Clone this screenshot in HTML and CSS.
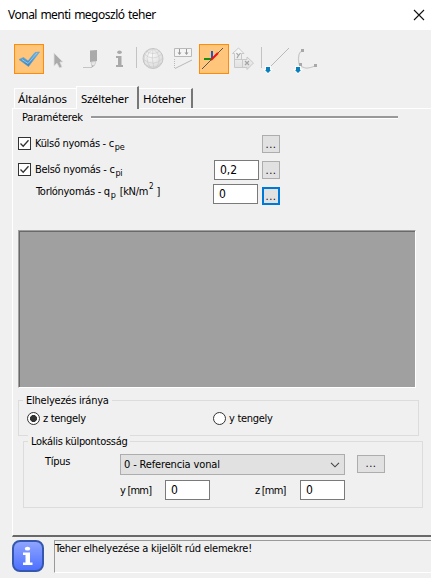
FILE: index.html
```html
<!DOCTYPE html>
<html lang="hu">
<head>
<meta charset="utf-8">
<title>Vonal menti megoszló teher</title>
<link rel="stylesheet" href="styles.css">
</head>
<body>
<header class="titlebar">
  <h1>Vonal menti megoszló teher</h1>
  <svg class="close" width="12" height="12" viewBox="0 0 12 12"><path d="M1 1L11 11M11 1L1 11" stroke="#111" stroke-width="1.1" fill="none"/></svg>
</header>
<div class="toolbar">
  <svg width="431" height="40" viewBox="0 40 431 40">
    <defs>
      <linearGradient id="check" x1="0" y1="0" x2="0" y2="1"><stop offset="0" stop-color="#6bb5e8"/><stop offset="1" stop-color="#3c83bb"/></linearGradient>
      <radialGradient id="ball" cx=".4" cy=".35" r=".7"><stop offset="0" stop-color="#f8f8f8"/><stop offset="1" stop-color="#dadada"/></radialGradient>
      <linearGradient id="axis" x1="0" y1="0" x2="0" y2="1"><stop offset="0" stop-color="#fafafa"/><stop offset="1" stop-color="#dfdfdf"/></linearGradient>
    </defs>
    <g fill="#ffc57a" stroke="#ff8c08"><rect x="14.5" y="44.500" width="29" height="29"/><rect x="199.500" y="44.500" width="29" height="29"/></g>
    <path d="M19 59.500L23.500 57.500L28 61L35 52.500L39.500 52L28.500 66.500Z" fill="url(#check)" stroke="#5b9aca" stroke-width=".6"/>
    <path d="M22 59.500L28 63.500L37 53" fill="none" stroke="#8bc7ef" stroke-width="1"/>
    <path d="M54 53V66L57 63.300L59.500 68L62 67L60 62H63Z" fill="#aaa" stroke="#dedede" stroke-width=".8"/>
    <path d="M90 50.500L97 50V61L90 62Z" fill="#aaa"/><path d="M91 62L96 61.500L94.500 65.500L92 67Z" fill="#e8e8e8" stroke="#bbb" stroke-width=".6"/><path d="M92 65.500H94L92 67Z" fill="#999"/><path d="M83 67.500H92" stroke="#c4c4c4"/>
    <g fill="#a9a9a9"><ellipse cx="119.500" cy="52.300" rx="2.300" ry="1.800"/><path d="M116 56H121.500V65H123V67H116V65H118V58H116Z"/></g>
    <path d="M136.500 47V68M261.500 47V68" stroke="#c3c3c3"/>
    <circle cx="153" cy="58.500" r="10" fill="url(#ball)" stroke="#bbb" stroke-width=".8"/>
    <g fill="none" stroke="#c2c2c2" stroke-width=".5"><path d="M144 54Q153 62 162 54M143 59Q154 68 163 58M146 51Q153 56 160 51M146 65Q155 70 161 63"/><path d="M153 48.500Q142 57 151 68M153 48.500Q151 59 154 68M153 48.500Q164 57 156 68M151 49Q141 54 145 65"/></g>
    <g stroke="#b9b9b9" fill="none"><path d="M174.500 48.500H191.500V56.500H174.500Z" fill="#f5f5f5"/><path d="M179.500 49V54M186.500 49V54" stroke="#999"/><path d="M174.500 59V69" stroke-dasharray="1 1"/><path d="M175 68.500L192 60"/></g>
    <path d="M177.500 52.500H181.500L179.500 55ZM184.500 52.500H188.500L186.500 55Z" fill="#999"/>
    <path d="M202 69L212 59M217 54L223 48" stroke="#555"/><path d="M212 51V59" stroke="#155bd3" stroke-width="2"/><path d="M204 59H212" stroke="#159016" stroke-width="2"/><path d="M211 60L218 53" stroke="#f01010" stroke-width="2"/>
    <path d="M238.500 48L244 53.500H241.500V59.500H247V57L253.500 63L247 69.500V67.500H234.500V53.500H232.500Z" fill="url(#axis)" stroke="#c8c8c8"/><path d="M234.500 59.500H242M242.500 59V67.500" stroke="#c9c9c9" fill="none"/>
    <path d="M236.500 53L238.500 55.500L240.500 53M238.500 55.500L237 58M245 61L249 65M249 61L245 65" stroke="#a4a4a4" stroke-width="1.200" fill="none"/>
    <path d="M271 66L289 48" stroke="#b9b9b9"/><path d="M302 51Q297 53 299 64Q304 71 315 66" stroke="#c8c8c8" stroke-width="1.200" fill="none"/>
    <g fill="#a8a8a8"><rect x="301" y="49" width="3" height="3"/><rect x="299" y="63" width="3" height="3"/><rect x="314" y="64" width="3" height="3"/></g>
    <path d="M266 67H270V70H271L268 73L265 70H266ZM296 67H300V70H301L298 73L295 70H296Z" fill="#087fbc" stroke="#fafafa" stroke-width="2" paint-order="stroke"/>
  </svg>
</div>
<nav class="tabs">
  <span class="tab first"><span class="t-alt">Általános</span></span>
  <span class="tab active"><span>Szélteher</span></span>
  <span class="tab last"><span>Hóteher</span></span>
</nav>
<main class="page">
  <div class="heading"><span class="t-par">Paraméterek</span></div>
  <section class="params">
    <label class="row"><span class="box"><svg width="13" height="13"><path d="M2.500 6.500L5.200 9.300L10.500 3.300" fill="none" stroke="#333" stroke-width="1.300"/></svg></span><span class="name"><span>Külső nyomás - c</span><small>pe</small></span><button class="more">...</button></label>
    <label class="row"><span class="box"><svg width="13" height="13"><path d="M2.500 6.500L5.200 9.300L10.500 3.300" fill="none" stroke="#333" stroke-width="1.300"/></svg></span><span class="name"><span>Belső nyomás - c</span><small>pi</small></span><span class="field">0,2</span><button class="more">...</button></label>
    <div class="row third"><span class="name"><span>Torlónyomás - q</span><small>p</small><span class="unit">[kN/m</span><small class="sup">2</small><span class="bracket">]</span></span><span class="field">0</span><button class="more focus">...</button></div>
  </section>
  <div class="canvas"></div>
  <section class="group direction">
    <span class="legend"><span class="t-elh">Elhelyezés iránya</span></span>
    <div class="radios"><span class="radio on"></span><span class="r1">z tengely</span><span class="radio"></span><span class="r2">y tengely</span></div>
  </section>
  <section class="group offset">
    <span class="legend"><span>Lokális külpontosság</span></span>
    <div class="type"><span class="type-name">Típus</span><span class="select"><span class="t-ref">0 - Referencia vonal</span><svg width="10" height="6"><path d="M1 .8L5 4.800L9 .8" stroke="#444" fill="none" stroke-width="1.100"/></svg></span><button class="wide">...</button></div>
    <div class="coords"><span class="coord">y [mm]</span><span class="field">0</span><span class="coord zc">z [mm]</span><span class="field">0</span></div>
  </section>
</main>
<footer class="status">
  <svg width="32" height="32" viewBox="0 0 32 32"><defs><linearGradient id="info" x1="0" y1="0" x2="0" y2="1"><stop offset="0" stop-color="#91a6ff"/><stop offset="1" stop-color="#4b6fff"/></linearGradient></defs><rect x="1" y="1" width="30" height="30" rx="7" fill="url(#info)" stroke="#3558ad" stroke-width="2"/><ellipse cx="15.500" cy="8.700" rx="2.700" ry="1.900" fill="#fff"/><path d="M11 12.500H18V22.500H20.500V25H11V22.500H13.500V15H11Z" fill="#fff"/></svg>
  <div class="message"><span>Teher elhelyezése a kijelölt rúd elemekre!</span></div>
</footer>
</body>
</html>
```
FILE: styles.css
```css
* { box-sizing: border-box; }
body { margin: 0; width: 431px; height: 578px; overflow: hidden; background: #f0f0f0; color: #000; font: 11px/14px "DejaVu Sans Condensed", "DejaVu Sans", sans-serif; letter-spacing: -.3px; white-space: nowrap; }
svg { display: block; flex: none; }
button { appearance: none; padding: 0; font: inherit; letter-spacing: .5px; color: #102; border: 1px solid #adadad; background: #e1e1e1; }
.titlebar { height: 30px; padding: 0 6px 0 8px; background: #fff; display: flex; justify-content: space-between; align-items: center; }
h1 { margin: 0; font: 12px/16px "Noto Sans", sans-serif; letter-spacing: -.5px; word-spacing: .8px; }
.close { margin-top: -1px; }
.toolbar { height: 56px; padding-top: 10px; }
.tabs { height: 22px; padding-left: 14px; display: flex; align-items: flex-end; font: 11.5px/14px "Noto Sans", sans-serif; }
.t-alt { letter-spacing: -.1px; }
.tab { height: 20px; padding: 3px 0 0 3px; border-top: 1px solid #fff; border-left: 1px solid #fff; width: 62px; }
.tab.active { height: 23px; margin-bottom: -1px; background: #f0f0f0; border-right: 2px solid #777; padding: 5px 0 0 4px; z-index: 1; width: 63px; }
.tab.last { width: 54px; border-left: 0; border-right: 2px solid #777; padding-left: 4px; }
.page { margin-left: 12px; height: 429px; border-top: 1px solid #fff; border-left: 1px solid #fff; border-bottom: 2px solid #696969; }
.heading { height: 14px; padding-left: 9px; width: 385px; display: flex; align-items: center; margin-top: 1px; }
.t-par { width: 69px; padding-top: 1px; letter-spacing: -.2px; }
.heading::after { content: ""; flex: 1; height: 2px; background: #999; border-bottom: 1px solid #fff; }
.params { padding: 10px 0 0 5px; height: 106px; }
.row { display: flex; align-items: center; height: 20px; width: 262px; margin-bottom: 6px; }
.box { width: 13px; height: 13px; border: 1px solid #333; background: #fff; flex: none; margin-top: -1px; }
.box svg { margin: -1px; }
.name { display: flex; margin: -1px 0 0 4px; flex: 1; }
small { font-size: 9px; line-height: 14px; position: relative; top: 3px; margin-left: 1px; }
.field { width: 45px; height: 20px; border: 1px solid #7a7a7a; background: #fff; padding: 2px 0 0 5px; line-height: 15px; font-size: 12px; letter-spacing: 0; }
.more { width: 18px; height: 18px; line-height: 15px; margin-left: 3px; }
.third { height: 22px; margin-top: -3px; }
.third .name { margin-left: 18px; margin-top: -4px; }
.third .field { margin-top: 0; }
.third .more { margin: 4px 0 0 4px; }
.focus { border: 2px solid #0078d7; line-height: 13px; }
.unit { margin-left: 4px; }
small.sup { top: -5px; font-size: 8px; }
.bracket { margin-left: 3px; }
.canvas { margin-left: 5px; width: 398px; height: 158px; background: #a0a0a0; border: 1px solid; border-color: #a0a0a0 #fff #fff #a0a0a0; box-shadow: inset 1px 1px #696969; }
.group { border: 1px solid #dcdcdc; }
.legend { display: block; width: max-content; background: #f0f0f0; padding: 1px 3px 0; margin: -8px 0 0 4px; height: 14px; }
.t-elh { letter-spacing: -.24px; }
.direction { margin: 12px 0 0 5px; width: 401px; height: 36px; }
.radios { display: flex; align-items: center; margin: 4px 0 0 8px; height: 14px; }
.radio { width: 13px; height: 13px; border: 1px solid #333; border-radius: 50%; background: #fff; margin-right: 3px; }
.on { background: radial-gradient(circle, #333 0 3.2px, #fff 3.800px); }
.r1 { width: 170px; padding-top: 2px; }
.r2 { padding-top: 2px; }
.offset { margin: 5px 0 0 10px; width: 400px; height: 67px; }
.type { display: flex; align-items: center; margin-top: 6px; height: 21px; }
.type-name { width: 96px; padding-left: 21px; margin-top: -6px; }
.select { width: 225px; height: 21px; border: 1px solid #adadad; background: #e1e1e1; display: flex; align-items: center; justify-content: space-between; padding: 0 4px 0 3px; }
.t-ref { letter-spacing: -.15px; padding-top: 1px; }
.wide { width: 28px; height: 18px; margin-left: 12px; margin-top: -1px; line-height: 14px; }
.coords { display: flex; align-items: center; margin: 5px 0 0 96px; height: 20px; }
.coord { width: 45px; letter-spacing: -.8px; padding-top: 1px; }
.zc { margin-left: 45px; }
.status { height: 41px; display: flex; padding: 3px 0 0 12px; }
.message { height: 33px; flex: 1; margin-left: 10px; border-top: 1px solid #999; border-left: 1px solid #999; border-bottom: 1px solid #fff; padding-top: 1px; letter-spacing: -.23px; }
```
